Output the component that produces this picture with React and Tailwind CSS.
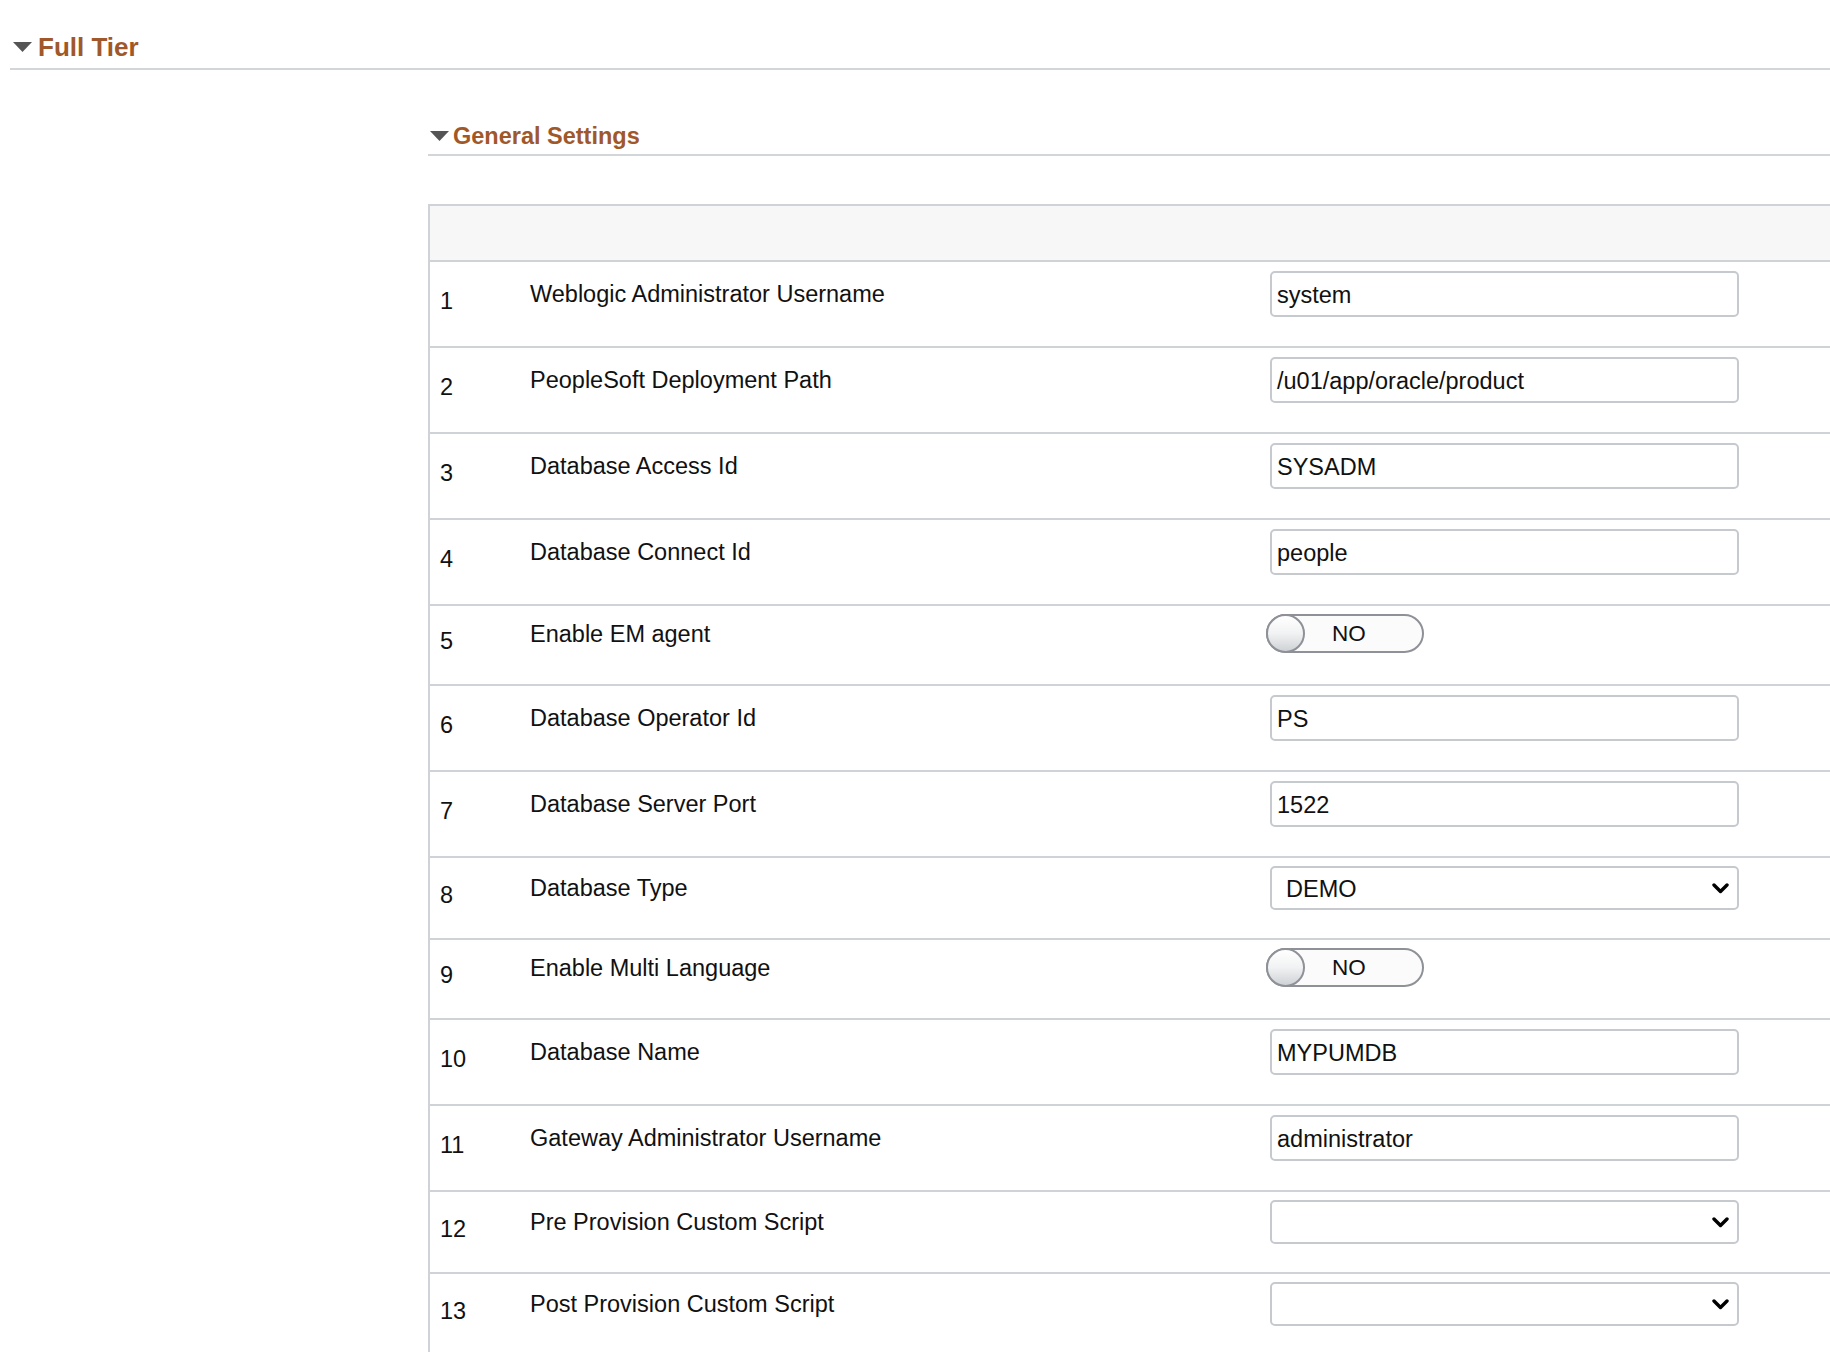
import React from "react";

const rows = [
  { n: 1, label: "Weblogic Administrator Username", type: "input", value: "system" },
  { n: 2, label: "PeopleSoft Deployment Path", type: "input", value: "/u01/app/oracle/product" },
  { n: 3, label: "Database Access Id", type: "input", value: "SYSADM" },
  { n: 4, label: "Database Connect Id", type: "input", value: "people" },
  { n: 5, label: "Enable EM agent", type: "toggle", value: "NO" },
  { n: 6, label: "Database Operator Id", type: "input", value: "PS" },
  { n: 7, label: "Database Server Port", type: "input", value: "1522" },
  { n: 8, label: "Database Type", type: "select", value: "DEMO" },
  { n: 9, label: "Enable Multi Language", type: "toggle", value: "NO" },
  { n: 10, label: "Database Name", type: "input", value: "MYPUMDB" },
  { n: 11, label: "Gateway Administrator Username", type: "input", value: "administrator" },
  { n: 12, label: "Pre Provision Custom Script", type: "select", value: "" },
  { n: 13, label: "Post Provision Custom Script", type: "select", value: "" },
];

function Triangle() {
  return (
    <svg width="19" height="10" viewBox="0 0 19 10" className="shrink-0">
      <polygon points="0,0 19,0 9.5,10" fill="#555555" />
    </svg>
  );
}

function Chevron() {
  return (
    <svg width="17" height="11" viewBox="0 0 17 11" className="shrink-0">
      <polyline
        points="2,2 8.5,8.5 15,2"
        fill="none"
        stroke="#000"
        strokeWidth="3.4"
        strokeLinecap="round"
        strokeLinejoin="round"
      />
    </svg>
  );
}

function Row({ row }) {
  if (row.type === "input") {
    return (
      <div className="h-[86px] border-t-2 border-[#cfd3d8] flex items-start pt-[9px]">
        <div className="w-[100px] pl-[10px] h-[46px] mt-[8px] flex items-center text-[23.5px] leading-none">
          {row.n}
        </div>
        <div className="w-[740px] h-[46px] pt-[2px] flex items-center text-[23.5px] leading-none">
          {row.label}
        </div>
        <div className="w-[469px] h-[46px] border-2 border-[#c6cacf] rounded-[5px] bg-white flex items-center pl-[5px] pt-[3px] text-[23.5px] leading-none">
          {row.value}
        </div>
      </div>
    );
  }
  if (row.type === "select") {
    return (
      <div className="h-[82px] border-t-2 border-[#cfd3d8] flex items-start pt-[8px]">
        <div className="w-[100px] pl-[10px] h-[44px] mt-[8px] flex items-center text-[23.5px] leading-none">
          {row.n}
        </div>
        <div className="w-[740px] h-[44px] pt-[2px] flex items-center text-[23.5px] leading-none">
          {row.label}
        </div>
        <div className="w-[469px] h-[44px] border-2 border-[#c6cacf] rounded-[5px] bg-white flex items-center justify-between pl-[14px] pr-[8px] text-[23.5px] leading-none">
          <span className="pt-[3px]">{row.value}</span>
          <Chevron />
        </div>
      </div>
    );
  }
  return (
    <div className="h-[80px] border-t-2 border-[#cfd3d8] flex items-start pt-[8px]">
      <div className="w-[100px] pl-[10px] h-[39px] mt-[8px] flex items-center text-[23.5px] leading-none">
        {row.n}
      </div>
      <div className="w-[740px] h-[39px] pt-[2px] flex items-center text-[23.5px] leading-none">
        {row.label}
      </div>
      <div className="relative ml-[-4px] w-[158px] h-[39px] rounded-full border-2 border-[#8e9197] bg-[#fbfbfb] flex items-center pl-[64px] pt-[1px] text-[22.5px] leading-none">
        <div className="absolute left-[-2px] top-[-2px] w-[39px] h-[39px] rounded-full border-2 border-[#8e9197] bg-gradient-to-b from-[#ffffff] via-[#f1f2f3] to-[#cfd2d6]" />
        <span>{row.value}</span>
      </div>
    </div>
  );
}

export default function App() {
  return (
    <div className="min-h-[1352px] w-full overflow-hidden bg-white pl-[10px] font-['Liberation_Sans',Arial,sans-serif] text-[#111]">
      <div className="h-[70px] border-b-2 border-[#d2d6db] flex items-end pb-[8px]">
        <div className="flex items-center">
          <div className="ml-[3px]">
            <Triangle />
          </div>
          <span className="ml-[6px] text-[26px] leading-none font-bold text-[#a0582a]">
            Full Tier
          </span>
        </div>
      </div>
      <div className="pl-[418px]">
        <div className="h-[86px] border-b-2 border-[#d2d6db] flex items-end pb-[6px]">
          <div className="flex items-center">
            <div className="ml-[2px]">
              <Triangle />
            </div>
            <span className="ml-[4px] text-[23.5px] leading-none font-bold text-[#a0582a]">
              General Settings
            </span>
          </div>
        </div>
        <div className="mt-[48px] border-l-2 border-t-2 border-[#cfd3d8]">
          <div className="h-[54px] bg-[#f7f7f7]" />
          {rows.map((r) => (
            <Row key={r.n} row={r} />
          ))}
        </div>
      </div>
    </div>
  );
}
